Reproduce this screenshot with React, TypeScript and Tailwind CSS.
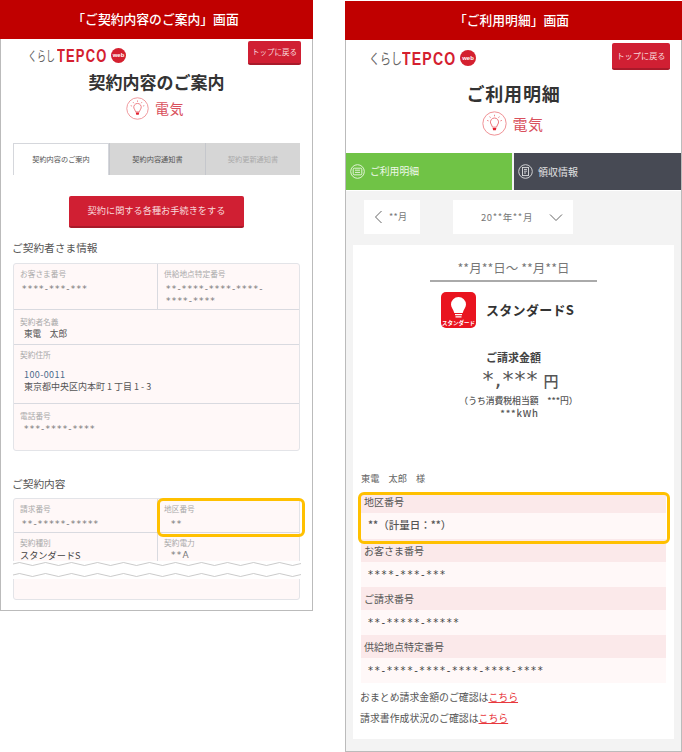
import type { ReactNode } from 'react';

const FONT = "font-['Noto_Sans_CJK_JP','Noto_Sans',sans-serif]";

function Logo({ big = false }: { big?: boolean }) {
    return (
        <div className={big ? 'flex items-center h-[16px]' : 'flex items-center h-[15px]'}>
            <span className={big ? 'w-[33px] text-[11px] leading-none text-[#666] whitespace-nowrap origin-left scale-y-[1.3]' : 'w-[27px] text-[9px] leading-none text-[#666] whitespace-nowrap origin-left scale-y-[1.5]'}>
                くらし
            </span>
            <span className={big ? "block w-[55px] ml-0 text-[19px] leading-none font-bold text-[#d4202f] tracking-[1.6px] origin-left scale-x-[0.74] whitespace-nowrap font-['Liberation_Sans',sans-serif]" : "block w-[51px] ml-[2px] text-[18px] leading-none font-bold text-[#d4202f] tracking-[1.6px] origin-left scale-x-[0.72] whitespace-nowrap font-['Liberation_Sans',sans-serif]"}>
                TEPCO
            </span>
            <span className={big ? "ml-[3px] w-[16px] h-[16px] rounded-full bg-[#d4202f] text-white text-[6px] font-bold leading-[16px] text-center font-['Liberation_Sans',sans-serif]" : "ml-[3px] w-[15px] h-[15px] rounded-full bg-[#d4202f] text-white text-[6px] font-bold leading-[15px] text-center font-['Liberation_Sans',sans-serif]"}>
                web
            </span>
        </div>
    );
}

function BulbBadge({ size }: { size: number }) {
    return (
        <svg width={size} height={size} viewBox="0 0 24 24" fill="none">
            <circle cx="12" cy="12" r="11.2" stroke="#ee8a8f" strokeWidth="0.9" fill="#fff" />
            <path d="M8.2 11.5a3.9 3.9 0 1 1 7.6 0c-.3 1.4-1.6 2.3-1.9 4h-3.8c-.3-1.7-1.6-2.6-1.9-4Z" stroke="#ea6d74" strokeWidth="0.9" />
            <path d="M10.2 16.2h3.6l-.5 2.2h-2.6Z" fill="#e2202f" />
            <path d="M12 3.6v1.5M7.3 5.3l.9 1.2M16.7 5.3l-.9 1.2M4.9 9l1.4.5M19.1 9l-1.4.5" stroke="#ea6d74" strokeWidth="0.8" />
        </svg>
    );
}

function TopButton({ className }: { className: string }) {
    return (
        <div className={`${className} bg-[#d01f33] border-b-2 border-[#a81a2a] rounded-[2px] text-[#f8d9dc] flex items-center justify-center whitespace-nowrap`}>
            トップに戻る
        </div>
    );
}

function Cell({ label, children, className = '' }: { label: string; children?: ReactNode; className?: string }) {
    return (
        <div className={`pl-[6px] text-[#666] ${className}`}>
            <div className="text-[7.7px] leading-[12px] text-[#aaa]">{label}</div>
            {children}
        </div>
    );
}

function Masked({ children, className = '' }: { children: ReactNode; className?: string }) {
    return <div className={`text-[9px] leading-[12px] text-[#777] tracking-[1.2px] font-['DejaVu_Sans',sans-serif] ${className}`}>{children}</div>;
}

function Wave() {
    const line = 'M0 3 q6.5 -3 13 0 t13 0 t13 0 t13 0 t13 0 t13 0 t13 0 t13 0 t13 0 t13 0 t13 0 t13 0 t13 0 t13 0 t13 0 t13 0 t13 0 t13 0 t13 0 t13 0 t13 0 t13 0 t13 0';
    return (
        <div className="absolute left-[12px] top-[561px] w-[288px] h-[18px] bg-white">
            <svg width="288" height="18" viewBox="0 0 288 18" fill="none">
                <path d={line} stroke="#bdbdbd" strokeWidth="0.8" />
                <path d={line} transform="translate(0 11)" stroke="#bdbdbd" strokeWidth="0.8" />
            </svg>
        </div>
    );
}

function LeftPanel() {
    return (
        <div className="relative w-[313px] h-[611px] border-x border-b border-[#bbb] shrink-0">
            <div className="-mx-px h-[39px] pr-[2px] bg-[#c00000] text-white text-[12.8px] font-medium leading-[38px] text-center">「ご契約内容のご案内」画面</div>
            <div className="flex items-start justify-between pl-[27px] pr-[11px] pt-[2px]">
                <div className="mt-[7px]">
                    <Logo />
                </div>
                <TopButton className="w-[53px] h-[24px] text-[7.5px]" />
            </div>
            <h1 className="mt-[5px] text-[17px] leading-[24px] font-bold text-[#333] text-center">契約内容のご案内</h1>
            <div className="mt-[3px] flex items-center justify-center gap-[6px] pr-[3px]">
                <BulbBadge size={23} />
                <span className="text-[14px] leading-[23px] text-[#d9505c] w-[29px] tracking-[0.5px]">電気</span>
            </div>
            <div className="mt-[23px] mx-[12px] flex h-[32px] text-[7.2px]">
                <div className="w-[96px] bg-white border border-b-0 border-[#d5d7dc] text-[#555] flex items-center justify-center">契約内容のご案内</div>
                <div className="w-[96px] bg-[#d6d6d6] border-l border-[#c5c7cc] text-[#555] flex items-center justify-center">契約内容通知書</div>
                <div className="w-[95px] bg-[#d6d6d6] border-l border-[#c5c7cc] text-[#aaa] flex items-center justify-center">契約更新通知書</div>
            </div>
            <div className="mt-[21px] mx-auto w-[175px] h-[32px] bg-[#d01f33] border-b-2 border-[#a81a2a] rounded-[2px] text-[9.2px] text-[#f8d9dc] flex items-center justify-center">
                契約に関する各種お手続きをする
            </div>
            <h2 className="mt-[12px] ml-[11px] text-[10.7px] leading-[16px] text-[#555]">ご契約者さま情報</h2>
            <div className="mt-[7px] mx-[12px] h-[188px] border border-[#e3e4e8] rounded-[3px] bg-[#fff8f8] flex flex-col">
                <div className="h-[46px] flex border-b border-[#d9dae0]">
                    <Cell label="お客さま番号" className="pt-[4px] w-[144px] border-r border-[#d9dae0]">
                        <Masked className="mt-[3px] ml-[2px]">****-***-***</Masked>
                    </Cell>
                    <Cell label="供給地点特定番号" className="pt-[4px] flex-1">
                        <Masked className="mt-[3px] ml-[2px]">**-****-****-****-</Masked>
                        <Masked className="ml-[2px]">****-****</Masked>
                    </Cell>
                </div>
                <Cell label="契約者名義" className="pt-[6px] h-[35px] border-b border-[#d9dae0]">
                    <div className="ml-[4px] -mt-px text-[8.6px] leading-[12px] text-[#555]">東電　太郎</div>
                </Cell>
                <Cell label="契約住所" className="pt-[4px] h-[59px] border-b border-[#d9dae0]">
                    <div className="ml-[4px] mt-[8px] text-[9px] leading-[12px] text-[#4a6a8a] tracking-[0.4px]">100-0011</div>
                    <div className="ml-[4px] text-[9px] leading-[12px] text-[#555]">東京都中央区内本町 1 丁目 1 - 3</div>
                </Cell>
                <Cell label="電話番号" className="pt-[6px] flex-1">
                    <Masked className="mt-[1px] ml-[4px]">***-****-****</Masked>
                </Cell>
            </div>
            <h2 className="mt-[25px] ml-[11px] text-[10.7px] leading-[16px] text-[#555]">ご契約内容</h2>
            <div className="mt-[6px] mx-[12px] h-[102px] border border-[#e3e4e8] rounded-[3px] bg-[#fff8f8] flex flex-col">
                <div className="h-[34px] flex border-b border-[#d9dae0]">
                    <Cell label="請求番号" className="pt-[4px] w-[144px] border-r border-[#d9dae0]">
                        <Masked className="mt-[3px] ml-[2px]">**-*****-*****</Masked>
                    </Cell>
                    <Cell label="地区番号" className="pt-[4px] flex-1">
                        <Masked className="mt-[3px] ml-[7px]">**</Masked>
                    </Cell>
                </div>
                <div className="h-[30px] flex">
                    <Cell label="契約種別" className="pt-[4px] w-[144px] border-r border-[#d9dae0]">
                        <div className="text-[9.2px] leading-[13px] text-[#444]">スタンダードS</div>
                    </Cell>
                    <Cell label="契約電力" className="pt-[4px] flex-1">
                        <Masked className="ml-[7px]">**A</Masked>
                    </Cell>
                </div>
            </div>
            <Wave />
            <div className="absolute left-[156px] top-[498px] w-[148px] h-[39px] border-[3px] border-[#ffc000] rounded-[6px]" />
        </div>
    );
}

function DetailRow({ label, value }: { label: string; value: string }) {
    return (
        <>
            <div className="h-[23px] bg-[#fbe9ea] pl-[3px] text-[10px] leading-[23px] text-[#555]">{label}</div>
            <div className="h-[25px] bg-[#fff8f8] pl-[7px] text-[10px] leading-[25px] text-[#444] tracking-[1.8px] font-['DejaVu_Sans',sans-serif]">{value}</div>
        </>
    );
}

function RightPanel() {
    return (
        <div className="relative w-[337px] h-[751px] mt-px ml-[32px] border-x border-b border-[#bbb] bg-[#f3f3f3] shrink-0">
            <div className="-mx-px h-[39px] pr-[4px] bg-[#c00000] text-white text-[12.8px] font-medium leading-[38px] text-center">「ご利用明細」画面</div>
            <div className="bg-white h-[113px]">
                <div className="flex items-start justify-between pl-[23px] pr-[11px] pt-[3px]">
                    <div className="mt-[7px]">
                        <Logo big />
                    </div>
                    <TopButton className="w-[58px] h-[27px] text-[8.2px]" />
                </div>
                <h1 className="mt-[11px] text-[18px] leading-[24px] font-bold text-[#333] text-center tracking-[0.8px]">ご利用明細</h1>
                <div className="mt-[6px] flex items-center justify-center gap-[6px] pr-[2px]">
                    <BulbBadge size={25} />
                    <span className="text-[15px] leading-[25px] text-[#d9505c] w-[31px] tracking-[0.5px]">電気</span>
                </div>
            </div>
            <div className="flex h-[38px] border-b border-white">
                <div className="w-[166px] bg-[#70c346] flex items-center pl-[4px] gap-[5px] text-[9.8px] text-[#eef8e8]">
                    <svg width="15" height="15" viewBox="0 0 15 15" fill="none" stroke="#eef8e8" strokeWidth="0.9">
                        <circle cx="7.5" cy="7.5" r="6.8" />
                        <rect x="3.2" y="4.2" width="8.6" height="6.6" rx="1" />
                        <path d="M5 6.2h5M5 8.4h5" />
                    </svg>
                    ご利用明細
                </div>
                <div className="ml-[2px] flex-1 bg-[#474a54] flex items-center pl-[4px] gap-[5px] text-[10px] text-[#e0e0e2]">
                    <svg width="15" height="15" viewBox="0 0 15 15" fill="none" stroke="#e0e0e2" strokeWidth="0.9">
                        <circle cx="7.5" cy="7.5" r="6.8" />
                        <rect x="4.5" y="3.4" width="6" height="8.2" />
                        <path d="M6 5.4h3M6 7.2h3M6 9h2" />
                    </svg>
                    領収情報
                </div>
            </div>
            <div className="mt-[9px] ml-[18px] flex items-center">
                <div className="w-[56px] h-[34px] bg-white flex items-center pl-[10px] gap-[6px] text-[#777]">
                    <svg width="9" height="14" viewBox="0 0 9 14" fill="none" stroke="#666" strokeWidth="1">
                        <path d="M7.5 1 1.5 7l6 6" />
                    </svg>
                    <span className="text-[9px] tracking-[0.3px]">**月</span>
                </div>
                <div className="ml-[33px] w-[120px] h-[34px] bg-white flex items-center justify-end pr-[10px] text-[#777]">
                    <span className="text-[9.5px] tracking-[0.6px]">20**年**月</span>
                    <svg className="ml-[16px]" width="14" height="9" viewBox="0 0 14 9" fill="none" stroke="#666" strokeWidth="1">
                        <path d="M1 1.5 7 7.5l6-6" />
                    </svg>
                </div>
            </div>
            <div className="mt-[11px] mx-[7px] h-[494px] bg-white flex flex-col">
                <div className="mt-[15px] text-center text-[12.5px] leading-[16px] text-[#777]">**月**日～ **月**日</div>
                <div className="mt-[4px] ml-[77px] w-[167px] h-[2px] bg-[#aaa]" />
                <div className="mt-[10px] ml-[88px] flex items-center">
                    <svg width="35" height="36" viewBox="0 0 35 36">
                        <rect width="35" height="36" rx="5" fill="#e9141f" />
                        <path d="M10 12.5a7.5 7.5 0 1 1 15 0c0 3-2.4 4.8-3.3 8.5h-8.4c-.9-3.7-3.3-5.5-3.3-8.5Z" fill="#fff" />
                        <path d="M14 22h7v1.3h-7ZM14.5 24.2h6v1.2h-6Z" fill="#fff" />
                        <text x="17.5" y="33" fontSize="5.5" fill="#fff" textAnchor="middle" fontWeight="700">スタンダード</text>
                    </svg>
                    <span className="ml-[10px] text-[13px] font-bold text-[#333] tracking-[0.3px]">スタンダードS</span>
                </div>
                <div className="mt-[21px] text-center text-[11px] leading-[16px] font-bold text-[#444]">ご請求金額</div>
                <div className="mt-[3px] pl-[14px] text-center leading-[24px] text-[#555] font-['DejaVu_Sans',sans-serif]">
                    <span className="text-[22px] tracking-[1px]">*,***</span>
                    <span className="ml-[5px] text-[15px] font-medium font-['Noto_Sans_CJK_JP',sans-serif]">円</span>
                </div>
                <div className="mt-[1px] pl-[10px] text-center text-[8.8px] leading-[12px] text-[#555] font-medium">（うち消費税相当額　***円）</div>
                <div className="pl-[12px] text-center text-[9.5px] leading-[12px] text-[#555] font-medium tracking-[0.8px]">***kWh</div>
                <div className="mt-[52px] ml-[8px] text-[9.2px] leading-[14px] text-[#666]">東電　太郎　様</div>
                <div className="mt-[8px] mx-[8px] flex flex-col">
                    <div className="h-[20px] bg-[#fbe9ea] pl-[3px] text-[10px] leading-[18px] text-[#555]">地区番号</div>
                    <div className="h-[26px] bg-[#fff8f8] pl-[7px] text-[10.5px] leading-[24px] text-[#555] font-medium">**（計量日：**）</div>
                    <DetailRow label="お客さま番号" value="****-***-***" />
                    <DetailRow label="ご請求番号" value="**-*****-*****" />
                    <DetailRow label="供給地点特定番号" value="**-****-****-****-****-****" />
                </div>
                <div className="mt-[4px] ml-[7px] text-[9.9px] leading-[21px] text-[#555]">
                    <div>
                        おまとめ請求金額のご確認は<span className="text-[#e8383d] underline">こちら</span>
                    </div>
                    <div>
                        請求書作成状況のご確認は<span className="text-[#e8383d] underline">こちら</span>
                    </div>
                </div>
            </div>
            <div className="absolute left-[12px] top-[491px] w-[312px] h-[52px] border-[3px] border-[#ffc000] rounded-[6px]" />
        </div>
    );
}

export default function App() {
    return (
        <div className={`${FONT} w-[682px] h-[752px] bg-white flex items-start overflow-hidden`}>
            <LeftPanel />
            <RightPanel />
        </div>
    );
}
